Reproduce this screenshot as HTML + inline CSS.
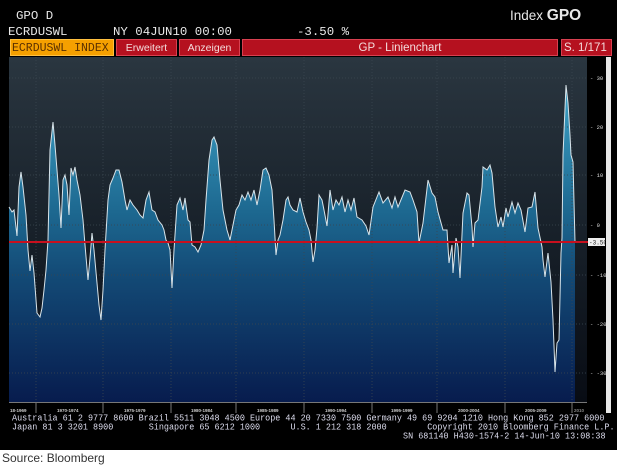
<!DOCTYPE html>
<html><head><meta charset="utf-8"><style>
html,body{margin:0;padding:0;background:#fff;width:620px;height:466px;overflow:hidden}
#f{position:absolute;left:0;top:0;width:617px;height:450px;background:#000}
.t{position:absolute;font-family:"Liberation Mono",monospace;color:#e8e8e8;font-size:12.4px;line-height:14px;white-space:pre}
.tab{position:absolute;top:39px;height:17px;font-family:"Liberation Sans",sans-serif;font-size:10.5px;line-height:17px;color:#f4dcdc;text-align:center;box-sizing:border-box;background:#b5111f;border:1px solid #d84050}
.ft{position:absolute;font-family:"Liberation Mono",monospace;font-size:8.45px;line-height:9px;color:#dde;white-space:pre;transform:scaleY(1.1);transform-origin:0 0}
#src{position:absolute;left:2px;top:451px;font-family:"Liberation Sans",sans-serif;font-size:12px;color:#333}
</style></head><body>
<div id="f"></div>
<div class="t" style="left:16px;top:9px">GPO D</div>
<div class="t" style="left:8px;top:25px">ECRDUSWL</div>
<div class="t" style="left:113px;top:25px">NY 04JUN10 00:00</div>
<div class="t" style="left:297px;top:25px">-3.50 %</div>
<div class="t" style="left:510px;top:9px;font-family:'Liberation Sans',sans-serif;font-size:13.5px">Index <b style="font-size:15.5px">GPO</b></div>
<div class="tab" style="left:10px;width:104px;background:#f5a000;border-color:#ffc040;color:#5a3000;font-family:'Liberation Mono',monospace;font-size:11.5px;text-align:left;padding-left:1px">ECRDUSWL INDEX</div>
<div class="tab" style="left:116px;width:61px">Erweitert</div>
<div class="tab" style="left:179px;width:61px">Anzeigen</div>
<div class="tab" style="left:242px;width:316px;font-size:11.5px">GP - Linienchart</div>
<div class="tab" style="left:561px;width:51px;font-size:11.5px;text-align:left;padding-left:2px">S. 1/171</div>
<svg style="position:absolute;left:0;top:0" width="620" height="466">
<defs>
<linearGradient id="bg" x1="0" y1="57" x2="0" y2="402" gradientUnits="userSpaceOnUse">
<stop offset="0" stop-color="#2a3640"/><stop offset="0.5" stop-color="#18212a"/><stop offset="1" stop-color="#080c14"/></linearGradient>
<linearGradient id="fl" x1="0" y1="85" x2="0" y2="402" gradientUnits="userSpaceOnUse">
<stop offset="0" stop-color="#3da2c6"/><stop offset="0.4" stop-color="#1d6890"/><stop offset="0.6" stop-color="#134a76"/><stop offset="1" stop-color="#071c4e"/></linearGradient>
</defs>
<rect x="9" y="57" width="578" height="345" fill="url(#bg)"/>
<path id="cv" fill="url(#fl)" stroke="none" d="M9 402 L9 207 L12 212 L14 210 L17 236 L19 187 L21 172 L23 187 L26 215 L28 250 L30 271 L32 255 L34 273 L37 313 L40 317 L42 308 L44 290 L46 270 L48 240 L50 150 L53 122 L55 145 L57 170 L59 195 L61 228 L63 180 L65 175 L67 185 L69 215 L71 168 L73 175 L75 167 L77 180 L80 195 L83 220 L85 245 L88 280 L90 258 L92 233 L94 250 L97 283 L99 305 L101 320 L103 290 L105 250 L108 200 L110 185 L113 178 L116 170 L119 170 L122 182 L125 200 L127 210 L130 200 L133 205 L137 210 L140 215 L143 218 L146 200 L149 192 L152 210 L155 212 L158 220 L162 225 L164 230 L166 240 L168 243 L170 250 L172 288 L174 250 L177 205 L180 198 L183 210 L185 198 L188 220 L190 222 L192 245 L195 247 L198 252 L201 245 L204 230 L206 200 L209 160 L212 140 L214 137 L217 145 L220 180 L223 210 L227 230 L230 240 L233 225 L236 210 L239 205 L242 195 L245 200 L248 192 L251 200 L254 190 L257 205 L260 190 L263 170 L266 168 L269 175 L272 190 L274 220 L276 255 L278 240 L280 235 L283 220 L286 200 L288 197 L290 205 L293 210 L297 212 L300 198 L303 212 L306 222 L309 230 L311 240 L313 262 L315 250 L317 228 L319 195 L322 200 L324 210 L327 226 L330 190 L333 210 L336 200 L339 205 L342 197 L345 212 L348 200 L351 210 L354 198 L357 217 L362 220 L366 226 L369 235 L373 207 L379 192 L383 203 L388 197 L392 208 L395 197 L398 207 L405 190 L410 192 L413 200 L417 212 L419 243 L423 223 L428 180 L432 193 L435 197 L438 212 L443 230 L447 230 L449 263 L452 245 L453 273 L456 238 L458 247 L460 278 L463 213 L467 193 L469 195 L472 227 L473 247 L475 223 L478 220 L482 187 L483 167 L487 170 L490 165 L492 173 L495 207 L498 227 L501 217 L503 227 L506 208 L508 217 L512 202 L515 213 L518 203 L521 210 L525 232 L528 208 L532 207 L535 192 L538 228 L542 247 L543 260 L545 277 L548 253 L551 282 L553 320 L555 372 L557 343 L559 340 L561 253 L562 238 L563 155 L566 85 L568 103 L570 135 L571 155 L573 162 L575 242 L575 402 Z"/>
<g stroke="#3a4650" stroke-width="1" stroke-dasharray="1 2" opacity="0.8">
<line x1="9" y1="78" x2="587" y2="78"/><line x1="9" y1="127" x2="587" y2="127"/><line x1="9" y1="175" x2="587" y2="175"/><line x1="9" y1="225" x2="587" y2="225"/><line x1="9" y1="275" x2="587" y2="275"/><line x1="9" y1="324" x2="587" y2="324"/><line x1="9" y1="373" x2="587" y2="373"/>
<line x1="36" y1="57" x2="36" y2="402"/><line x1="103" y1="57" x2="103" y2="402"/><line x1="171" y1="57" x2="171" y2="402"/><line x1="236" y1="57" x2="236" y2="402"/><line x1="304" y1="57" x2="304" y2="402"/><line x1="372" y1="57" x2="372" y2="402"/><line x1="437" y1="57" x2="437" y2="402"/><line x1="505" y1="57" x2="505" y2="402"/><line x1="572" y1="57" x2="572" y2="402"/>
</g>
<polyline fill="none" stroke="#d8e4ea" stroke-width="1" points="9,207 12,212 14,210 17,236 19,187 21,172 23,187 26,215 28,250 30,271 32,255 34,273 37,313 40,317 42,308 44,290 46,270 48,240 50,150 53,122 55,145 57,170 59,195 61,228 63,180 65,175 67,185 69,215 71,168 73,175 75,167 77,180 80,195 83,220 85,245 88,280 90,258 92,233 94,250 97,283 99,305 101,320 103,290 105,250 108,200 110,185 113,178 116,170 119,170 122,182 125,200 127,210 130,200 133,205 137,210 140,215 143,218 146,200 149,192 152,210 155,212 158,220 162,225 164,230 166,240 168,243 170,250 172,288 174,250 177,205 180,198 183,210 185,198 188,220 190,222 192,245 195,247 198,252 201,245 204,230 206,200 209,160 212,140 214,137 217,145 220,180 223,210 227,230 230,240 233,225 236,210 239,205 242,195 245,200 248,192 251,200 254,190 257,205 260,190 263,170 266,168 269,175 272,190 274,220 276,255 278,240 280,235 283,220 286,200 288,197 290,205 293,210 297,212 300,198 303,212 306,222 309,230 311,240 313,262 315,250 317,228 319,195 322,200 324,210 327,226 330,190 333,210 336,200 339,205 342,197 345,212 348,200 351,210 354,198 357,217 362,220 366,226 369,235 373,207 379,192 383,203 388,197 392,208 395,197 398,207 405,190 410,192 413,200 417,212 419,243 423,223 428,180 432,193 435,197 438,212 443,230 447,230 449,263 452,245 453,273 456,238 458,247 460,278 463,213 467,193 469,195 472,227 473,247 475,223 478,220 482,187 483,167 487,170 490,165 492,173 495,207 498,227 501,217 503,227 506,208 508,217 512,202 515,213 518,203 521,210 525,232 528,208 532,207 535,192 538,228 542,247 543,260 545,277 548,253 551,282 553,320 555,372 557,343 559,340 561,253 562,238 563,155 566,85 568,103 570,135 571,155 573,162 575,242"/>
<line x1="9" y1="242" x2="588" y2="242" stroke="#c8101e" stroke-width="2"/>
<rect x="588" y="238" width="17" height="8" fill="#eee"/>
<text x="589" y="244.5" font-family="Liberation Mono" font-size="6" fill="#222">-3.50</text>
<g fill="#ddd" font-family="Liberation Mono" font-size="5.5">
<text x="590" y="80">- 30</text><text x="590" y="129">- 20</text><text x="590" y="177">- 10</text><text x="590" y="227">- 0</text><text x="590" y="277">- -10</text><text x="590" y="326">- -20</text><text x="590" y="375">- -30</text>
</g>
<rect x="606" y="57" width="5" height="356" fill="#e8e8e8"/>
<g stroke="#777" stroke-width="1"><line x1="9" y1="402.5" x2="587" y2="402.5"/>
<line x1="36" y1="403" x2="36" y2="413"/><line x1="103" y1="403" x2="103" y2="413"/><line x1="171" y1="403" x2="171" y2="413"/><line x1="236" y1="403" x2="236" y2="413"/><line x1="304" y1="403" x2="304" y2="413"/><line x1="372" y1="403" x2="372" y2="413"/><line x1="437" y1="403" x2="437" y2="413"/><line x1="505" y1="403" x2="505" y2="413"/><line x1="572" y1="403" x2="572" y2="413"/></g>
<g fill="#ccc" font-family="Liberation Sans" font-size="4.5" font-weight="bold">
<text x="10" y="412">18-1969</text><text x="57" y="412">1970-1974</text><text x="124" y="412">1975-1979</text><text x="191" y="412">1980-1984</text><text x="257" y="412">1985-1989</text><text x="325" y="412">1990-1994</text><text x="391" y="412">1995-1999</text><text x="458" y="412">2000-2004</text><text x="525" y="412">2005-2009</text><text x="574" y="412" fill="#888">2010</text>
</g>
</svg>
<div class="ft" style="left:12px;top:414px">Australia 61 2 9777 8600 Brazil 5511 3048 4500 Europe 44 20 7330 7500 Germany 49 69 9204 1210 Hong Kong 852 2977 6000</div>
<div class="ft" style="left:12px;top:423px">Japan 81 3 3201 8900       Singapore 65 6212 1000      U.S. 1 212 318 2000        Copyright 2010 Bloomberg Finance L.P.</div>
<div class="ft" style="left:403px;top:432px">SN 681140 H430-1574-2 14-Jun-10 13:08:38</div>
<div id="src">Source: Bloomberg</div>
</body></html>
